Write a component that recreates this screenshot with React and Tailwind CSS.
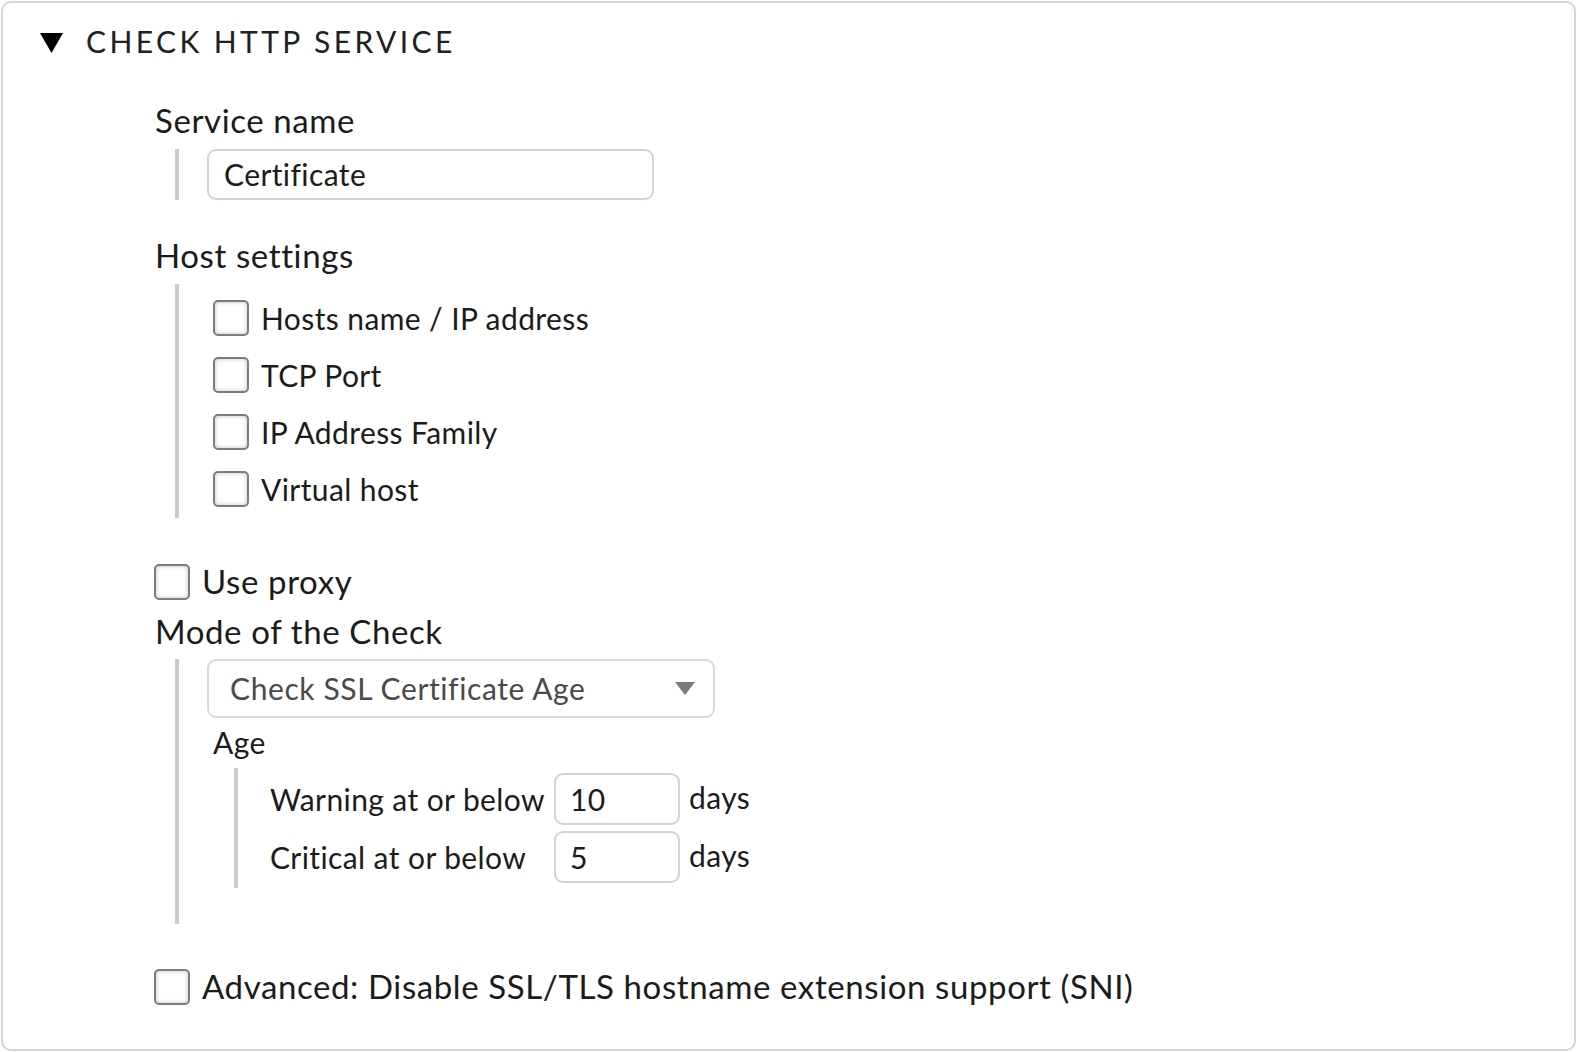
import { useState } from "react";

const Checkbox = ({ checked, onChange }) => (
  <button
    type="button"
    onClick={onChange}
    className="w-[36px] h-[36px] shrink-0 rounded-[5px] border-2 border-[#7d7d7d] bg-white shadow-[inset_0_0_4px_rgba(0,0,0,0.25)] flex items-center justify-center"
  >
    {checked && <span className="text-[24px] leading-none">✓</span>}
  </button>
);

const Bar = ({ className = "" }) => (
  <div className={`w-[4px] shrink-0 bg-[#cbcbcb] ${className}`} />
);

export default function App() {
  const [checks, setChecks] = useState({});
  const toggle = (k) => setChecks({ ...checks, [k]: !checks[k] });

  const hostOptions = [
    "Hosts name / IP address",
    "TCP Port",
    "IP Address Family",
    "Virtual host",
  ];

  return (
    <div className="w-[1577px] h-[1052px] bg-white p-[1px] font-['Lato','Liberation_Sans',sans-serif] text-[33px] text-[#1b1b1b] tracking-[0.6px]">
      <div className="h-full border-2 border-[#d4d4df] rounded-[10px] pl-[37px] pt-[18px]">
        <div className="flex items-center gap-[23px] h-[40px]">
          <svg width="23" height="20" viewBox="0 0 23 20" className="mt-[4px]">
            <polygon points="0,0 23,0 11.5,20" fill="#000" />
          </svg>
          <h1 className="text-[30px] tracking-[3.4px] text-[#202020] font-normal">CHECK HTTP SERVICE</h1>
        </div>

        <div className="pl-[115px] mt-[39px]">
          <div className="leading-[40px]">Service name</div>
          <div className="flex mt-[9px] ml-[20px] gap-[28px] text-[30px] tracking-[0.4px]">
            <Bar className="h-[51px]" />
            <div className="w-[447px] h-[51px] border-2 border-[#d0d2de] rounded-[9px] flex items-center px-[15px]">
              Certificate
            </div>
          </div>

          <div className="leading-[40px] mt-[35px]">Host settings</div>
          <div className="flex mt-[9px] ml-[20px] gap-[34px] text-[30px] tracking-[0.4px]">
            <Bar className="h-[234px]" />
            <div className="flex flex-col gap-[21px] pt-[16px]">
              {hostOptions.map((label) => (
                <div key={label} className="flex items-center gap-[12px] h-[36px]">
                  <Checkbox checked={checks[label]} onChange={() => toggle(label)} />
                  <span>{label}</span>
                </div>
              ))}
            </div>
          </div>

          <div className="flex items-center gap-[12px] mt-[46px] -ml-[1px] h-[36px]">
            <Checkbox checked={checks.proxy} onChange={() => toggle("proxy")} />
            <span>Use proxy</span>
          </div>

          <div className="leading-[40px] mt-[11px]">Mode of the Check</div>
          <div className="flex mt-[8px] ml-[20px] gap-[28px] text-[30px] tracking-[0.4px]">
            <Bar className="h-[265px]" />
            <div className="flex flex-col">
              <div className="w-[508px] h-[59px] border-2 border-[#d9d9d9] rounded-[9px] flex items-center justify-between pl-[21px] pr-[18px] text-[#4a4a4a] tracking-[0.6px]">
                <span>Check SSL Certificate Age</span>
                <svg width="20" height="13" viewBox="0 0 20 13">
                  <polygon points="0,0 20,0 10,13" fill="#7a7a7a" />
                </svg>
              </div>
              <div className="leading-[40px] mt-[4px] ml-[6px]">Age</div>
              <div className="flex mt-[6px] ml-[27px] gap-[32px]">
                <Bar className="h-[120px]" />
                <div className="flex flex-col gap-[6px] pt-[5px]">
                  {[
                    ["Warning at or below", "10"],
                    ["Critical at or below", "5"],
                  ].map(([label, value]) => (
                    <div key={label} className="flex items-center h-[52px]">
                      <span className="w-[284px]">{label}</span>
                      <div className="w-[126px] h-[52px] border-2 border-[#d0d2de] rounded-[9px] flex items-center px-[14px]">
                        {value}
                      </div>
                      <span className="ml-[9px] -mt-[4px]">days</span>
                    </div>
                  ))}
                </div>
              </div>
            </div>
          </div>

          <div className="flex items-center gap-[12px] mt-[45px] -ml-[1px] h-[36px]">
            <Checkbox checked={checks.sni} onChange={() => toggle("sni")} />
            <span>Advanced: Disable SSL/TLS hostname extension support (SNI)</span>
          </div>
        </div>
      </div>
    </div>
  );
}
